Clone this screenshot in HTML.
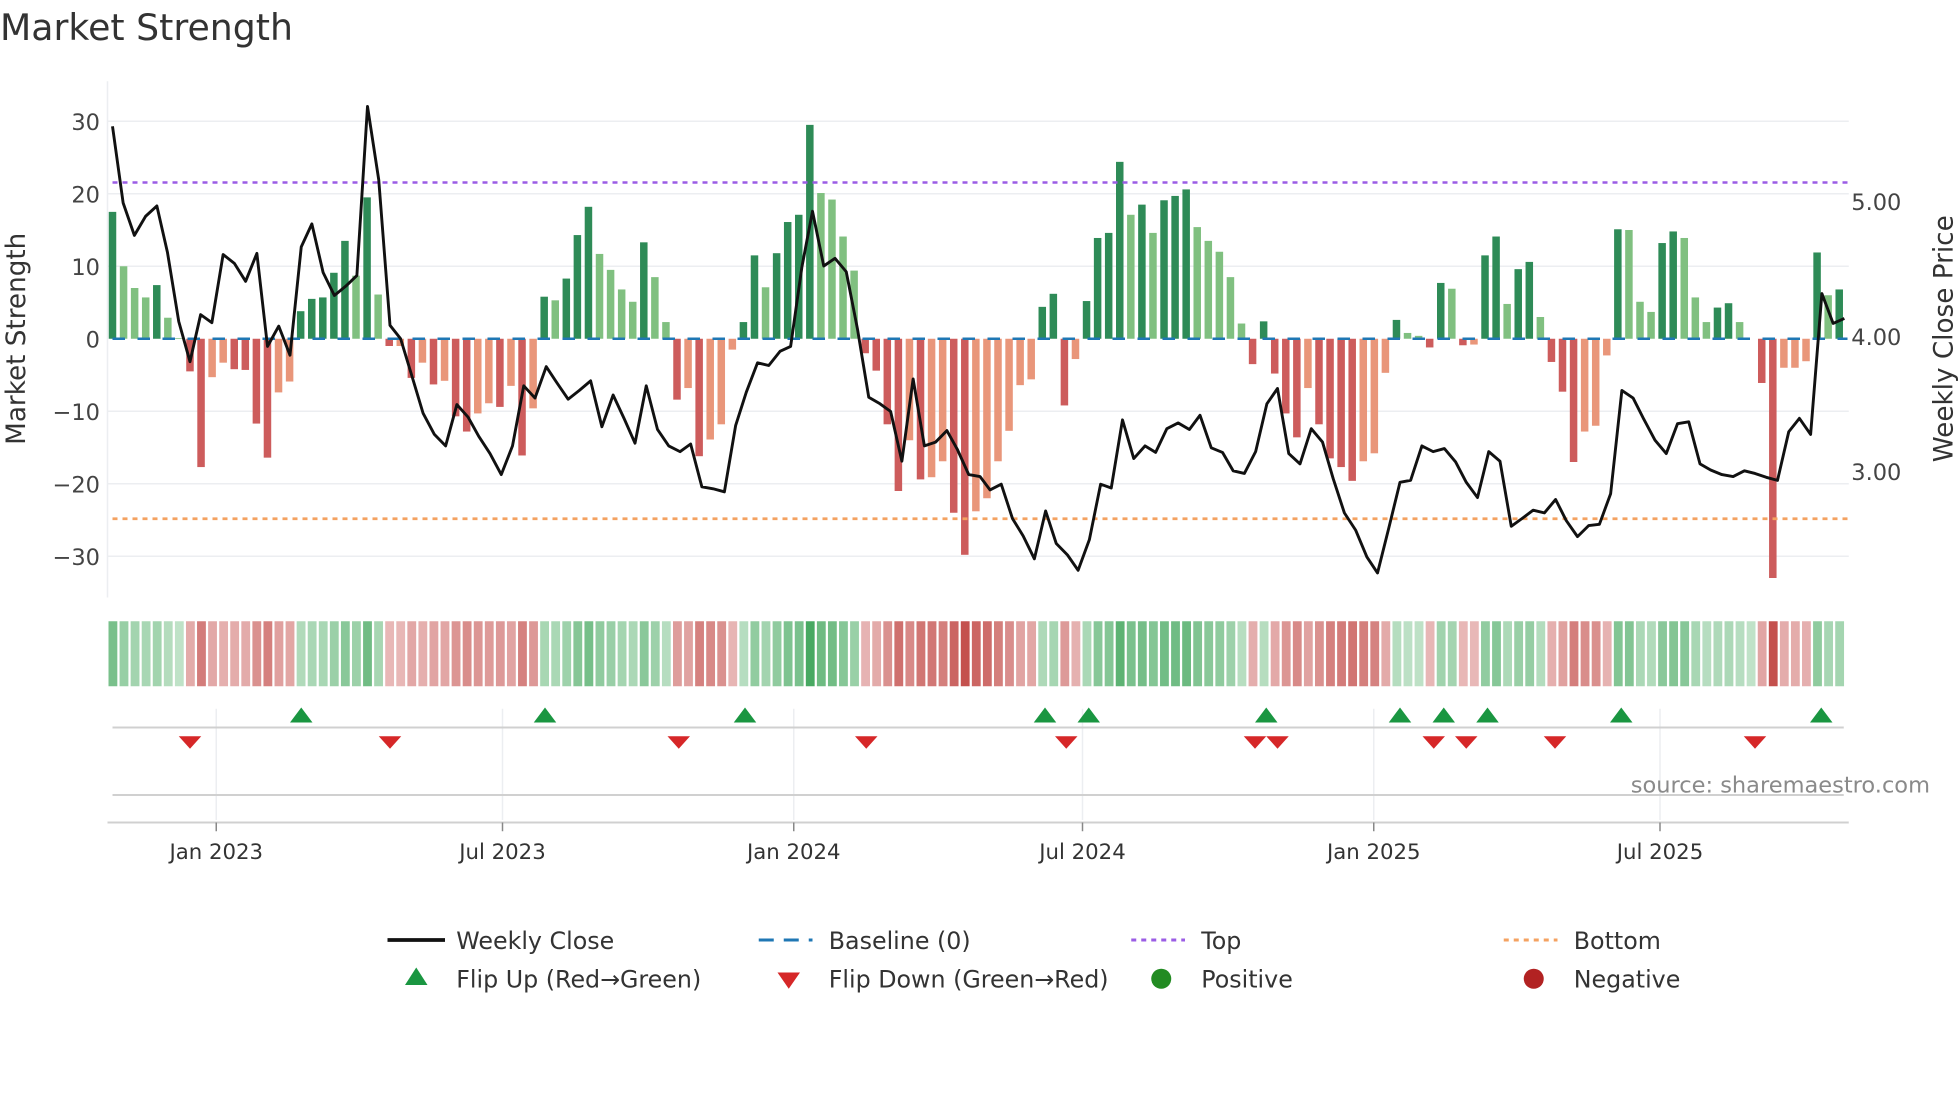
<!DOCTYPE html>
<html><head><meta charset="utf-8">
<style>
html,body{margin:0;padding:0;background:#fff;width:1960px;height:1102px;overflow:hidden}
svg{display:block}
text{font-family:"DejaVu Sans","Liberation Sans",sans-serif}
</style></head>
<body>
<svg id="s" width="1960" height="1102" viewBox="0 0 1568 881.6" xmlns="http://www.w3.org/2000/svg">
<rect width="1568" height="881.6" fill="#fff"/>
<text x="0" y="32" font-size="29" fill="#333">Market Strength</text>
<g stroke="#eceef1" stroke-width="1.2">
<line x1="86" x2="1479" y1="97" y2="97"/><line x1="86" x2="1479" y1="155" y2="155"/>
<line x1="86" x2="1479" y1="213" y2="213"/><line x1="86" x2="1479" y1="329" y2="329"/>
<line x1="86" x2="1479" y1="387" y2="387"/><line x1="86" x2="1479" y1="445" y2="445"/>
</g>
<line x1="86" x2="86" y1="65" y2="478" stroke="#eceef1" stroke-width="1.2"/>
<g font-size="18" fill="#444" text-anchor="end">
<text x="80" y="104">30</text><text x="80" y="162">20</text><text x="80" y="220">10</text>
<text x="80" y="278">0</text><text x="80" y="336">−10</text><text x="80" y="394">−20</text><text x="80" y="452">−30</text>
</g>
<g font-size="18" fill="#444">
<text x="1481" y="168">5.00</text><text x="1481" y="276">4.00</text><text x="1481" y="384">3.00</text>
</g>
<text transform="translate(20,271) rotate(-90)" font-size="21" fill="#333" text-anchor="middle">Market Strength</text>
<text transform="translate(1562,271) rotate(-90)" font-size="21" fill="#333" text-anchor="middle">Weekly Close Price</text>
<g id="bars"></g>
<line x1="90" x2="1478" y1="271" y2="271" stroke="#1f77b4" stroke-width="2" stroke-dasharray="10,10"/>
<line x1="90" x2="1478" y1="146" y2="146" stroke="#9b5de5" stroke-width="2" stroke-dasharray="4,4"/>
<line x1="90" x2="1478" y1="415" y2="415" stroke="#f4a261" stroke-width="2.2" stroke-dasharray="4,4"/>
<g transform="scale(0.5,0.3062)">
<polyline fill="none" stroke="#111" stroke-linejoin="round" vector-effect="non-scaling-stroke" style="stroke-width:2.9px" points="180,330 197,530 215,615 233,565 251,538 268,660 286,840 304,945 321,822 339,843 357,665 375,688 393,735 411,662 428,905 446,852 464,928 482,645 499,585 517,712 535,772 553,748 571,720 588,278 606,470 624,850 641,885 659,982 677,1080 695,1135 713,1165 731,1057 749,1090 766,1140 784,1185 802,1240 820,1165 838,1008 856,1040 874,958 891,1000 909,1043 927,1020 945,995 963,1115 981,1032 999,1095 1016,1158 1034,1008 1052,1122 1070,1165 1088,1180 1105,1160 1123,1272 1141,1277 1159,1285 1177,1112 1194,1025 1212,948 1230,955 1248,918 1265,905 1283,698 1300,552 1318,695 1336,675 1354,710 1372,860 1390,1038 1408,1055 1425,1075 1443,1205 1461,990 1479,1165 1497,1155 1515,1125 1532,1175 1550,1240 1568,1245 1584,1280 1602,1265 1620,1355 1637,1400 1655,1460 1673,1335 1690,1420 1708,1450 1725,1490 1743,1410 1761,1265 1778,1275 1796,1097 1814,1198 1832,1165 1849,1182 1867,1120 1885,1105 1903,1122 1920,1085 1938,1170 1956,1182 1973,1230 1991,1237 2009,1180 2027,1055 2044,1015 2062,1185 2080,1212 2098,1120 2116,1155 2133,1250 2151,1340 2169,1385 2187,1455 2204,1497 2222,1380 2240,1260 2257,1255 2275,1165 2293,1180 2311,1172 2329,1207 2346,1260 2364,1300 2382,1180 2400,1205 2418,1375 2435,1355 2453,1333 2471,1340 2489,1305 2506,1360 2524,1402 2542,1373 2559,1370 2577,1290 2595,1020 2613,1040 2630,1095 2648,1150 2666,1185 2684,1107 2702,1102 2720,1212 2737,1228 2755,1240 2773,1245 2791,1230 2808,1237 2826,1247 2844,1255 2862,1128 2879,1093 2897,1135 2915,767 2933,845 2951,832"/>
</g>
<g id="heat"></g>
<g stroke="#eceef1" stroke-width="1.2">
<line x1="173" x2="173" y1="567" y2="656"/><line x1="402" x2="402" y1="567" y2="656"/>
<line x1="635" x2="635" y1="567" y2="656"/><line x1="866" x2="866" y1="567" y2="656"/>
<line x1="1099" x2="1099" y1="567" y2="656"/><line x1="1328" x2="1328" y1="567" y2="656"/>
</g>
<line x1="90" x2="1475" y1="582" y2="582" stroke="#d0d0d0" stroke-width="1.6"/>
<line x1="90" x2="1475" y1="636" y2="636" stroke="#d0d0d0" stroke-width="1.6"/>
<line x1="86" x2="1479" y1="658" y2="658" stroke="#d0d0d0" stroke-width="1.6"/>
<g stroke="#888" stroke-width="1.2">
<line x1="173" x2="173" y1="658" y2="665"/><line x1="402" x2="402" y1="658" y2="665"/>
<line x1="635" x2="635" y1="658" y2="665"/><line x1="866" x2="866" y1="658" y2="665"/>
<line x1="1099" x2="1099" y1="658" y2="665"/><line x1="1328" x2="1328" y1="658" y2="665"/>
</g>
<g id="flips"></g>
<text x="1544" y="634" font-size="18" fill="#8a8a8a" text-anchor="end">source: sharemaestro.com</text>
<g font-size="17" fill="#333" text-anchor="middle">
<text x="173" y="687">Jan 2023</text><text x="402" y="687">Jul 2023</text><text x="635" y="687">Jan 2024</text>
<text x="866" y="687">Jul 2024</text><text x="1099" y="687">Jan 2025</text><text x="1328" y="687">Jul 2025</text>
</g>
<g font-size="19" fill="#333">
<line x1="310" x2="356" y1="752" y2="752" stroke="#111" stroke-width="3"/>
<text x="365" y="759">Weekly Close</text>
<line x1="607" x2="650" y1="752" y2="752" stroke="#1f77b4" stroke-width="2.4" stroke-dasharray="12,8"/>
<text x="663" y="759">Baseline (0)</text>
<line x1="905" x2="948" y1="752" y2="752" stroke="#9b5de5" stroke-width="2.4" stroke-dasharray="4,4"/>
<text x="961" y="759">Top</text>
<line x1="1203" x2="1246" y1="752" y2="752" stroke="#f4a261" stroke-width="2.4" stroke-dasharray="4,4"/>
<text x="1259" y="759">Bottom</text>
<polygon points="333,774 324,788 342,788" fill="#1a9641"/>
<text x="365" y="790">Flip Up (Red→Green)</text>
<polygon points="622,778 640,778 631,791" fill="#d62728"/>
<text x="663" y="790">Flip Down (Green→Red)</text>
<circle cx="929" cy="783" r="8" fill="#228b22"/>
<text x="961" y="790">Positive</text>
<circle cx="1227" cy="783" r="8" fill="#b22222"/>
<text x="1259" y="790">Negative</text>
</g>
</svg>
<script>
var d="17.5D 10L 7L 5.7L 7.4D 2.9L 0.1L -4.5D -17.7D -5.3L -3.3L -4.2D -4.3D -11.7D -16.4D -7.4L -5.9L 3.8D 5.5D 5.7D 9.1D 13.5D 8.7L 19.5D 6.1L -1D -1L -5.4D -3.3L -6.3D -5.8L -10.7D -12.8D -10.3L -8.9L -9.4D -6.5L -16.1D -9.6L 5.8D 5.3L 8.3D 14.3D 18.2D 11.7L 9.5L 6.8L 5.1L 13.3D 8.5L 2.3L -8.4D -6.8L -16.2D -13.9L -11.8L -1.5L 2.3D 11.5D 7.1L 11.8D 16.1D 17.1D 29.5D 20.1L 19.2L 14.1L 9.4L -2D -4.4D -11.8D -21D -14L -19.4D -19.1L -16.9L -24D -29.8D -23.8L -22L -16.9L -12.7L -6.4L -5.6L 4.4D 6.2D -9.2D -2.8L 5.2D 13.9D 14.6D 24.4D 17.1L 18.5D 14.6L 19.1D 19.7D 20.6D 15.4L 13.5L 12.0L 8.5L 2.1L -3.5D 2.4D -4.8D -10.3D -13.6D -6.8L -11.8D -16.5D -17.7D -19.6D -16.9L -15.8L -4.7L 2.6D 0.8L 0.4L -1.2D 7.7D 6.9L -0.9D -0.8L 11.5D 14.1D 4.8L 9.6D 10.6D 3.0L -3.2D -7.3D -17D -12.8L -12L -2.3L 15.1D 15L 5.1L 3.7L 13.2D 14.8D 13.9L 5.7L 2.3L 4.3D 4.9D 2.3L 0L -6.1D -33D -4L -4L -3.1L 11.9D 6.0L 6.8D".split(" ");
var ns="http://www.w3.org/2000/svg",bars=document.getElementById("bars"),heat=document.getElementById("heat");
function R(g,x,y,w,h,f){var r=document.createElementNS(ns,"rect");r.setAttribute("x",x);r.setAttribute("y",y);r.setAttribute("width",w);r.setAttribute("height",h);r.setAttribute("fill",f);g.appendChild(r);}
function mix(a,b,t){return "rgb("+a.map(function(v,i){return Math.round(v+(b[i]-v)*t)}).join(",")+")";}
var sp=8.855;
d.forEach(function(s,i){
 var v=parseFloat(s),dk=s.slice(-1)=="D",x=90+i*sp;
 var h=Math.abs(v)*5.8,f;
 if(v>=0)f=dk?"#2e8b57":"#80c080";else f=dk?"#cd5c5c":"#e9967a";
 if(h>0.3)R(bars,x-3,v>=0?271-h:271,6,h,f);
 var t=Math.min(1,0.25+0.75*Math.abs(v)/30);
 var c=v>=0?mix([232,245,234],[70,168,96],t):mix([245,222,222],[196,80,77],t);
 R(heat,86+i*sp+0.8,497,sp-1.8,52,c);
});
var fl=document.getElementById("flips");
[241,436,596,836,871,1013,1120,1155,1190,1297,1457].forEach(function(x){var p=document.createElementNS(ns,"polygon");p.setAttribute("points",x+",566 "+(x-9)+",578 "+(x+9)+",578");p.setAttribute("fill","#1a9641");fl.appendChild(p);});
[152,312,543,693,853,1004,1022,1147,1173,1244,1404].forEach(function(x){var p=document.createElementNS(ns,"polygon");p.setAttribute("points",(x-9)+",589 "+(x+9)+",589 "+x+",599");p.setAttribute("fill","#d62728");fl.appendChild(p);});
</script>
</body></html>
